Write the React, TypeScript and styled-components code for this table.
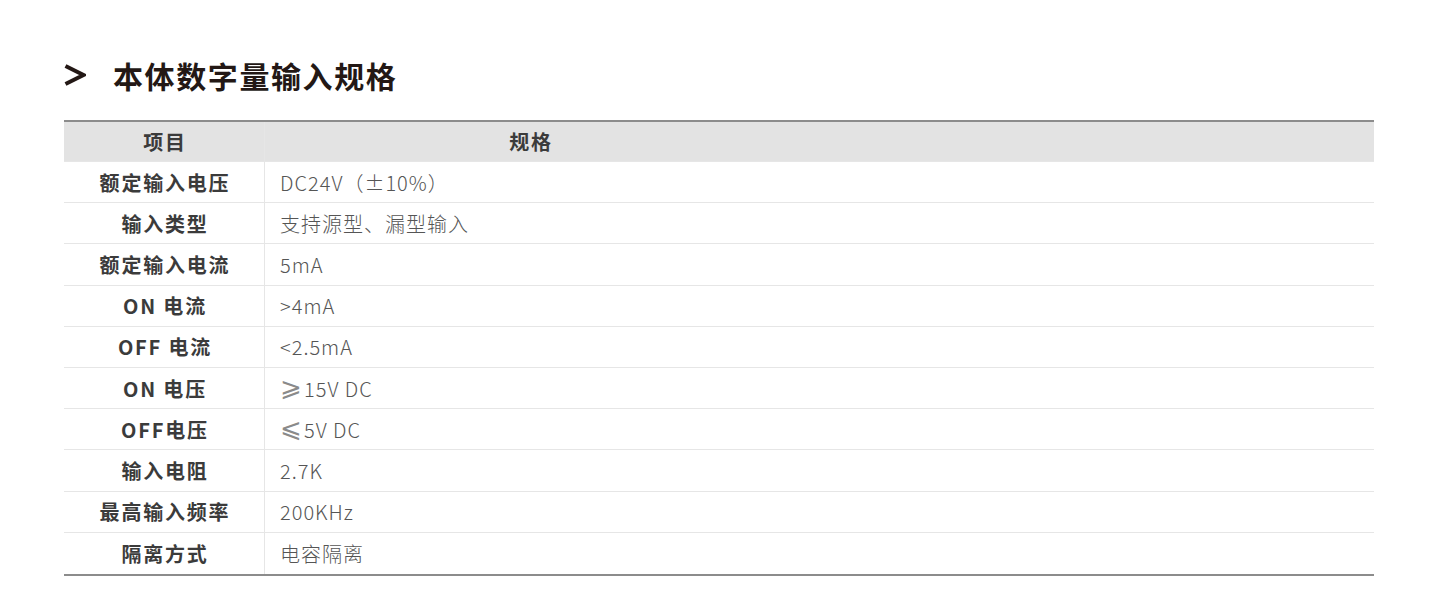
import React from "react";
import styled, { createGlobalStyle } from "styled-components";

const Global = createGlobalStyle`
  html, body { margin: 0; padding: 0; background: #fff; }
  body { font-family: "Noto Sans CJK SC", "Noto Sans", sans-serif; }
`;

const Page = styled.div`
  width: 1440px;
  height: 602px;
  box-sizing: border-box;
  padding: 55px 66px 0 64px;
  background: #fff;
`;

const Title = styled.h2`
  margin: 0;
  height: 40px;
  display: flex;
  align-items: center;
  gap: 27px;
  font-size: 30px;
  font-weight: 700;
  letter-spacing: 1.6px;
  color: #231815;
`;

const Chevron = styled.svg`
  width: 22px;
  height: 24px;
  flex: none;
`;

const Table = styled.div`
  margin-top: 25px;
  display: grid;
  grid-template-columns: 201px 1fr;
  border-top: 2px solid #8c8c8c;
  border-bottom: 2px solid #8c8c8c;
`;

const Row = styled.div<{ $head?: boolean }>`
  display: contents;
  & > div {
    background: ${(p) => (p.$head ? "#e3e3e3" : "#fff")};
    height: ${(p) => (p.$head ? "40px" : "41.2px")};
  }
`;

const Cell = styled.div<{ $last?: boolean }>`
  box-sizing: border-box;
  display: flex;
  align-items: center;
  border-bottom: ${(p) => (p.$last ? "none" : "1px solid #e6e6e6")};
`;

const LabelCell = styled(Cell)`
  justify-content: center;
  border-right: 1px solid #e6e6e6;
  font-size: 20px;
  font-weight: 700;
  letter-spacing: 1.8px;
  color: #3b3b3b;
  padding-left: 2px;
`;

const ValueCell = styled(Cell)`
  padding-left: 15px;
  font-size: 20px;
  font-weight: 300;
  letter-spacing: 1px;
  color: #555;
`;

const HeadSpec = styled.span`
  display: block;
  width: 532px;
  text-align: center;
  font-weight: 700;
  color: #3b3b3b;
  letter-spacing: 1.8px;
`;

const Sym = styled.span`
  display: inline-block;
  font-family: "DejaVu Sans", sans-serif;
  font-size: 26px;
  line-height: 20px;
  margin-right: 1px;
  color: #8a8a8a;
  transform: translateY(-1px);
`;

const rows: [string, React.ReactNode][] = [
  ["额定输入电压", "DC24V（±10%）"],
  ["输入类型", "支持源型、漏型输入"],
  ["额定输入电流", "5mA"],
  ["ON 电流", ">4mA"],
  ["OFF 电流", "<2.5mA"],
  ["ON 电压", <><Sym>⩾</Sym>15V DC</>],
  ["OFF电压", <><Sym>⩽</Sym>5V DC</>],
  ["输入电阻", "2.7K"],
  ["最高输入频率", "200KHz"],
  ["隔离方式", "电容隔离"],
];

export default function App() {
  return (
    <Page>
      <Global />
      <Title>
        <Chevron viewBox="0 0 22 24">
          <path d="M1.5 3 L19.5 12 L1.5 21" fill="none" stroke="#231815" strokeWidth="4" strokeLinejoin="miter" />
        </Chevron>
        本体数字量输入规格
      </Title>
      <Table>
        <Row $head>
          <LabelCell>项目</LabelCell>
          <ValueCell style={{ paddingLeft: 0 }}>
            <HeadSpec>规格</HeadSpec>
          </ValueCell>
        </Row>
        {rows.map(([k, v], i) => (
          <Row key={k}>
            <LabelCell $last={i === rows.length - 1}>{k}</LabelCell>
            <ValueCell $last={i === rows.length - 1}>{v}</ValueCell>
          </Row>
        ))}
      </Table>
    </Page>
  );
}
